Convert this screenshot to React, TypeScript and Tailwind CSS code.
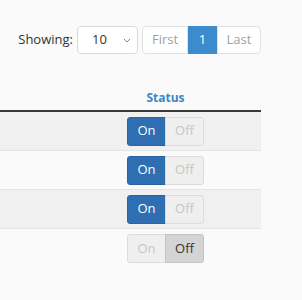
const rows = [true, true, true, false];

function Toggle({ on }: { on: boolean }) {
  return (
    <div className="inline-flex h-[29px] text-[13px]">
      <button
        className={
          on
            ? "w-[39px] rounded-l-[3px] border border-[#2a65a3] bg-[#2e6eb1] text-white"
            : "w-[39px] rounded-l-[3px] border border-[#dcdcdc] bg-[#efefef] text-[#c6c6c6]"
        }
      >
        On
      </button>
      <button
        className={
          on
            ? "-ml-px w-[39px] rounded-r-[3px] border border-[#dcdcdc] bg-[#efefef] text-[#c6c6c6]"
            : "-ml-px w-[39px] rounded-r-[3px] border border-[#c4c4c4] bg-[#d4d4d4] text-[#333]"
        }
      >
        Off
      </button>
    </div>
  );
}

export default function App() {
  return (
    <div className="h-[300px] w-[302px] bg-[#fafafa] font-['Open_Sans',sans-serif] text-[#333]">
      <div className="w-[261px] pt-[26px]">
        <div className="flex items-center justify-end">
          <span className="mr-[4px] text-[13px]">Showing:</span>
          <div className="relative flex h-[28px] w-[61px] items-center rounded-[4px] border border-[#d9d9d9] bg-white text-[13px]">
            <span className="ml-[14px]">10</span>
            <svg className="absolute right-[6px] top-[11px]" width="8" height="5" viewBox="0 0 8 5" fill="none">
              <path d="M1 1l3 3 3-3" stroke="#8a8a8a" strokeWidth="1" />
            </svg>
          </div>
          <div className="ml-[4px] flex h-[28px] text-[13px]">
            <span className="flex w-[46px] items-center justify-center rounded-l-[4px] border border-[#e2e2e2] bg-white text-[#a0a0a0]">
              First
            </span>
            <span className="flex w-[29px] items-center justify-center bg-[#3c8bcc] text-white">1</span>
            <span className="flex w-[44px] items-center justify-center rounded-r-[4px] border border-[#e2e2e2] bg-white text-[#a0a0a0]">
              Last
            </span>
          </div>
        </div>

        <div className="mt-[34px] flex h-[24px] border-b-2 border-[#3a3a3a] pt-[2px]">
          <div className="w-[70px]" />
          <div className="flex-1 text-center text-[12px] font-bold leading-[16px] text-[#3e86c6]">Status</div>
        </div>

        {rows.map((on, i) => (
          <div
            key={i}
            className={
              (i % 2 === 0 ? "bg-[#f0f0f0] " : "bg-[#fafafa] ") +
              (i < 3 ? "border-b border-[#e4e4e4] " : "") +
              "flex h-[39px] items-center"
            }
          >
            <div className="w-[70px]" />
            <div className="flex flex-1 justify-center">
              <Toggle on={on} />
            </div>
          </div>
        ))}
      </div>
    </div>
  );
}
